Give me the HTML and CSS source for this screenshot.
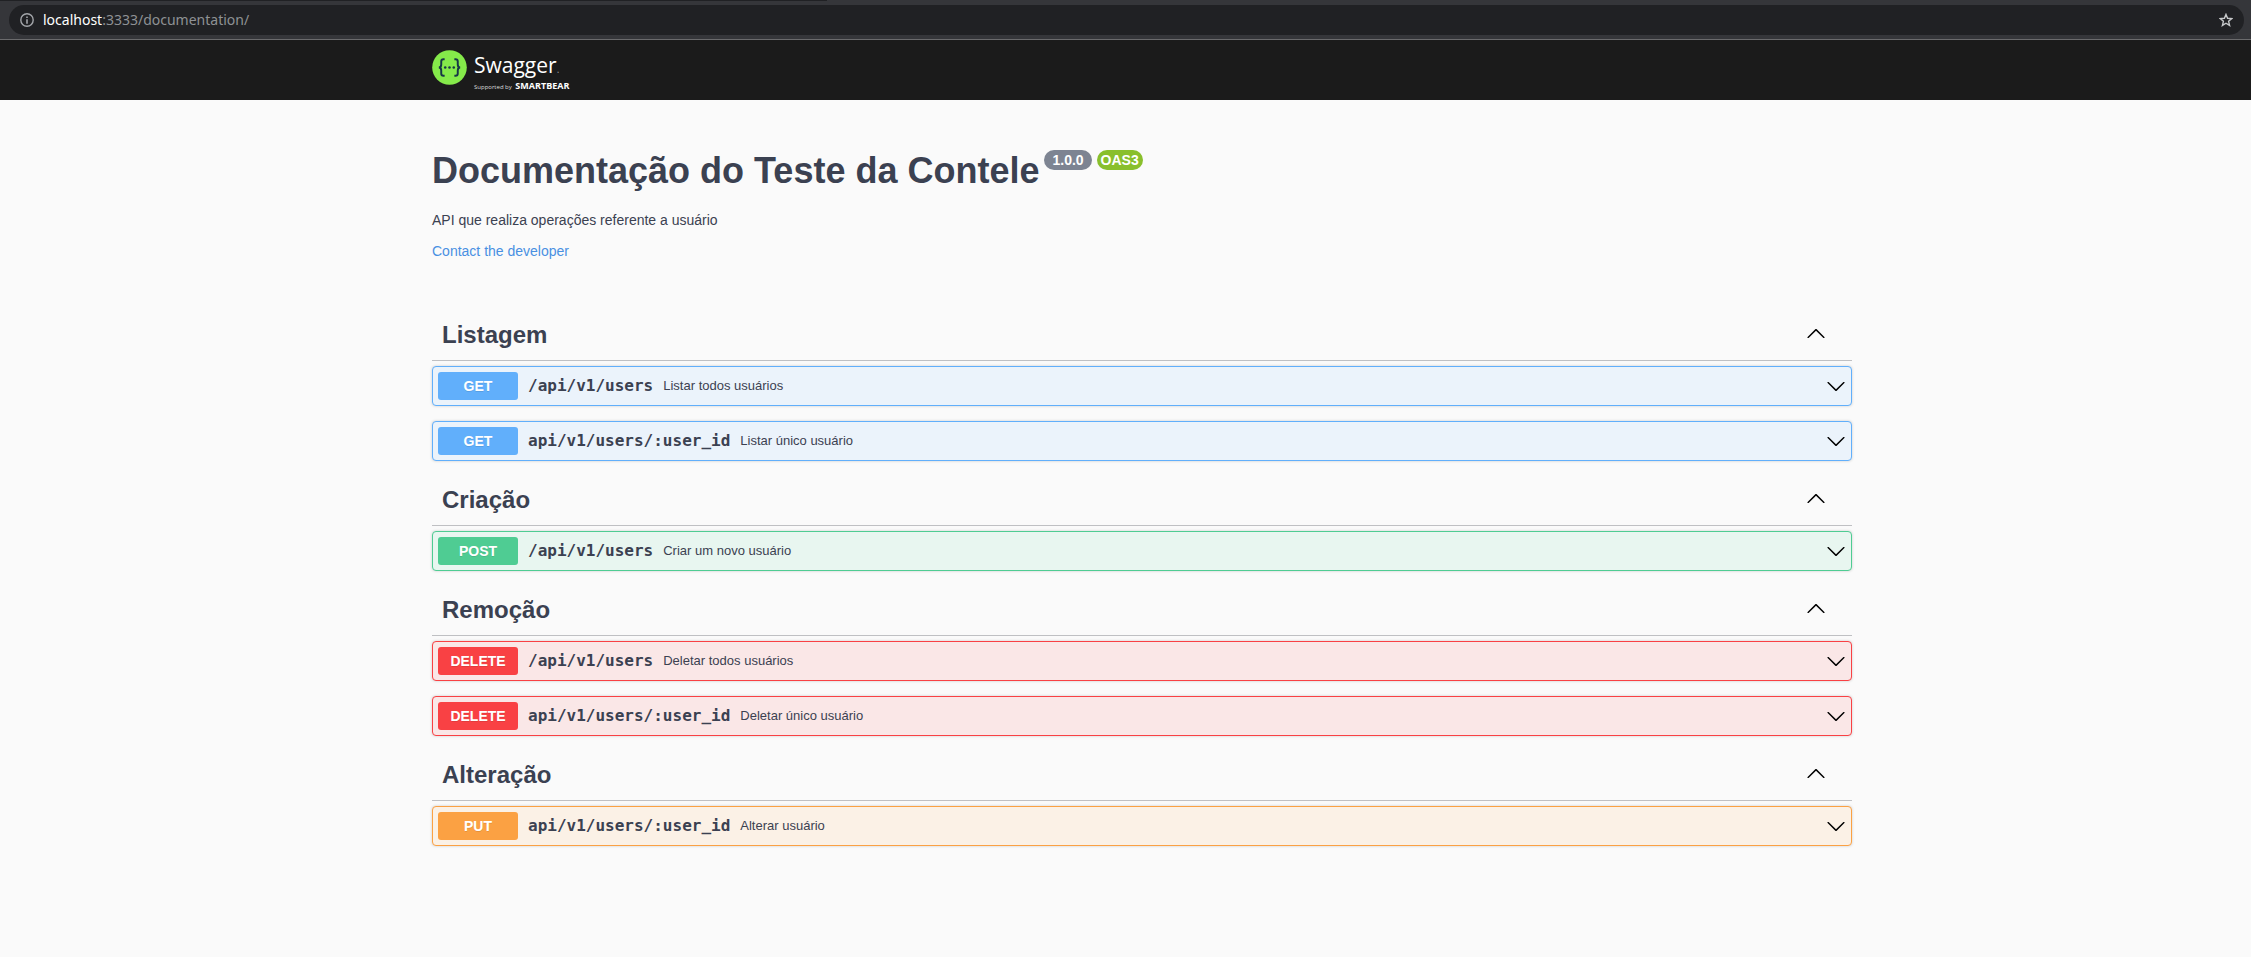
FILE: index.html
```html
<!DOCTYPE html>
<html lang="pt-BR">
<head>
<meta charset="utf-8">
<title>Swagger UI</title>
<link rel="stylesheet" href="styles.css">
</head>
<body>
<svg width="0" height="0" class="sprite" aria-hidden="true">
  <symbol id="down" viewBox="0 0 20 20"><path d="M17.418 6.109c.272-.268.709-.268.979 0s.271.701 0 .969l-7.908 7.83c-.27.268-.707.268-.979 0l-7.908-7.83c-.27-.268-.27-.701 0-.969.271-.268.709-.268.979 0L10 13.25l7.418-7.141z"/></symbol>
  <symbol id="up" viewBox="0 0 20 20"><path d="M17.418 14.908c.272.268.709.268.979 0s.271-.701 0-.969l-7.908-7.83c-.27-.268-.707-.268-.979 0l-7.908 7.83c-.27.268-.27.701 0 .969.271.268.709.268.979 0L10 7.767l7.418 7.141z"/></symbol>
</svg>
<div class="browser">
  <div class="browser-edge"></div>
  <div class="address">
    <svg class="info-icon" viewBox="0 0 14 14" aria-hidden="true"><circle cx="7" cy="7" r="6.2" fill="none" stroke="#a3a6aa" stroke-width="1.4"/><path d="M6.2 3.4h1.6v1.7H6.2zM6.2 6.2h1.6v4.5H6.2z" fill="#a3a6aa"/></svg>
    <div class="url"><span class="host">localhost</span>:3333/documentation/</div>
    <button class="star" aria-label="Favoritos"><svg viewBox="0 0 14 14"><path d="M7 1.4l1.6 3.9 4.2.3-3.2 2.7 1 4.1L7 10.2l-3.6 2.2 1-4.1L1.2 5.6l4.2-.3z" fill="none" stroke="#c6c8ca" stroke-width="1.4"/></svg></button>
  </div>
</div>
<header class="topbar">
  <div class="wrapper">
    <a class="logo" href="#">
      <svg class="logo-mark" viewBox="0 0 36 36" aria-hidden="true">
        <circle cx="18" cy="18" r="17.8" fill="#85ea4a"/>
        <g fill="none" stroke="#173647" stroke-width="2"><path d="M13 9.500h-1.200q-2.300 0-2.300 2.400v3.100q0 3-2.500 3q2.500 0 2.500 3v3.100q0 2.400 2.300 2.400H13"/><path d="M23 9.500h1.200q2.300 0 2.300 2.400v3.100q0 3 2.500 3q-2.500 0-2.500 3v3.100q0 2.400-2.300 2.400H23"/></g>
        <g fill="#173647"><circle cx="13.600" cy="18" r="1.300"/><circle cx="18" cy="18" r="1.300"/><circle cx="22.400" cy="18" r="1.300"/></g>
      </svg>
      <span class="logo-text">
        <span class="logo-name">Swagger<span class="logo-dot">.</span></span>
        <span class="logo-by">Supported by <b>SMARTBEAR</b></span>
      </span>
    </a>
  </div>
</header>
<main class="wrapper">
  <section class="info">
    <h1>Documentação do Teste da Contele <span class="badge">1.0.0</span><span class="badge oas">OAS3</span></h1>
    <p>API que realiza operações referente a usuário</p>
    <a href="#">Contact the developer</a>
  </section>
  <section class="tag">
    <h2><button class="tag-head">Listagem<svg><use href="#up"/></svg></button></h2>
    <button class="op get"><span class="method">GET</span><span class="path">/api/v1/users</span><span class="desc">Listar todos usuários</span><svg><use href="#down"/></svg></button>
    <button class="op get"><span class="method">GET</span><span class="path">api/v1/users/:user_id</span><span class="desc">Listar único usuário</span><svg><use href="#down"/></svg></button>
  </section>
  <section class="tag">
    <h2><button class="tag-head">Criação<svg><use href="#up"/></svg></button></h2>
    <button class="op post"><span class="method">POST</span><span class="path">/api/v1/users</span><span class="desc">Criar um novo usuário</span><svg><use href="#down"/></svg></button>
  </section>
  <section class="tag">
    <h2><button class="tag-head">Remoção<svg><use href="#up"/></svg></button></h2>
    <button class="op delete"><span class="method">DELETE</span><span class="path">/api/v1/users</span><span class="desc">Deletar todos usuários</span><svg><use href="#down"/></svg></button>
    <button class="op delete"><span class="method">DELETE</span><span class="path">api/v1/users/:user_id</span><span class="desc">Deletar único usuário</span><svg><use href="#down"/></svg></button>
  </section>
  <section class="tag">
    <h2><button class="tag-head">Alteração<svg><use href="#up"/></svg></button></h2>
    <button class="op put"><span class="method">PUT</span><span class="path">api/v1/users/:user_id</span><span class="desc">Alterar usuário</span><svg><use href="#down"/></svg></button>
  </section>
</main>
</body>
</html>
```
FILE: styles.css
```css
* { box-sizing: border-box; }
body { margin: 0; background: #fafafa; color: #3b4151; font-family: "Liberation Sans", Arial, sans-serif; }
button { margin: 0; border: 0; background: none; color: inherit; font: inherit; text-align: left; cursor: pointer; }
.sprite { position: absolute; }

.browser { height: 40px; padding: 0 7px 4px 9px; background: #35363a; border-bottom: 1px solid #6b6b6d; }
.browser-edge { width: 37%; height: 1px; margin: 0 0 4px -9px; background: #202124; }
.address { display: flex; align-items: center; height: 30px; padding: 0 11px; border-radius: 15px; background: #202124; }
.info-icon { width: 14px; height: 14px; }
.url { flex: 1; margin-left: 9px; color: #8e9194; font: 14px/20px "Noto Sans", sans-serif; }
.host { color: #fff; }
.star { display: flex; padding: 0; }
.star svg { width: 14px; height: 14px; }

.topbar { height: 60px; background: #1b1b1b; padding-left: 33px; }
.wrapper { width: 100%; max-width: 1460px; margin: 0 auto; padding: 0 20px; }
.logo { display: inline-flex; padding-top: 10px; color: #fff; text-decoration: none; }
.logo-mark { width: 35px; height: 35px; }
.logo-text { display: flex; flex-direction: column; margin: 3px 0 0 7px; font-family: "Open Sans", sans-serif; }
.logo-name { font-size: 21px; line-height: 25px; }
.logo-dot { font-size: 10px; color: #999; }
.logo-by { font-size: 6px; line-height: 8px; color: #ddd; }
.logo-by b { margin-left: 2px; font-size: 9px; color: #fff; }

main.wrapper { padding-left: 53px; max-width: 1493px; }
.info { padding: 50px 0 51px; }
h1 { display: flex; align-items: flex-start; margin: 0; font-size: 36px; line-height: 42px; }
.badge { margin-left: 5px; padding: 0 8px; border-radius: 10px; background: #7d8492; color: #fff; font-size: 14px; line-height: 20px; }
.badge.oas { padding: 0 4px; background: #89bf2c; }
.info p { margin: 20px 0 14px; font-size: 14px; line-height: 16px; }
.info a { display: inline-block; font-size: 14px; line-height: 16px; color: #4990e2; text-decoration: none; }

h2 { margin: 0 0 5px; font-size: 24px; line-height: 28px; }
.tag-head { display: flex; justify-content: space-between; width: 100%; padding: 10px 26px 11px 10px; border-bottom: 1px solid #bfc0c3; }
.tag-head svg { width: 20px; height: 20px; margin-top: 2px; fill: #000; }
.op { display: flex; align-items: center; width: 100%; height: 40px; margin-bottom: 15px; padding: 5px; border: 1px solid; border-radius: 4px; box-shadow: 0 0 3px rgba(0, 0, 0, .19); }
.op svg { width: 20px; height: 20px; margin-left: auto; fill: #000; }
.method { width: 80px; border-radius: 3px; color: #fff; font-size: 14px; font-weight: bold; line-height: 28px; text-align: center; text-shadow: 0 1px 0 rgba(0, 0, 0, .1); }
.path { padding: 0 10px; font: bold 16px/20px "DejaVu Sans Mono", monospace; }
.desc { font-size: 13px; line-height: 16px; }
.get { background: #ebf3fb; border-color: #61affb; }
.get .method { background: #61affb; }
.post { background: #e8f6f0; border-color: #4fcc93; }
.post .method { background: #4fcc93; }
.delete { background: #fae7e7; border-color: #f94144; }
.delete .method { background: #f94144; }
.put { background: #fbf1e6; border-color: #fba143; }
.put .method { background: #fba143; }
```
